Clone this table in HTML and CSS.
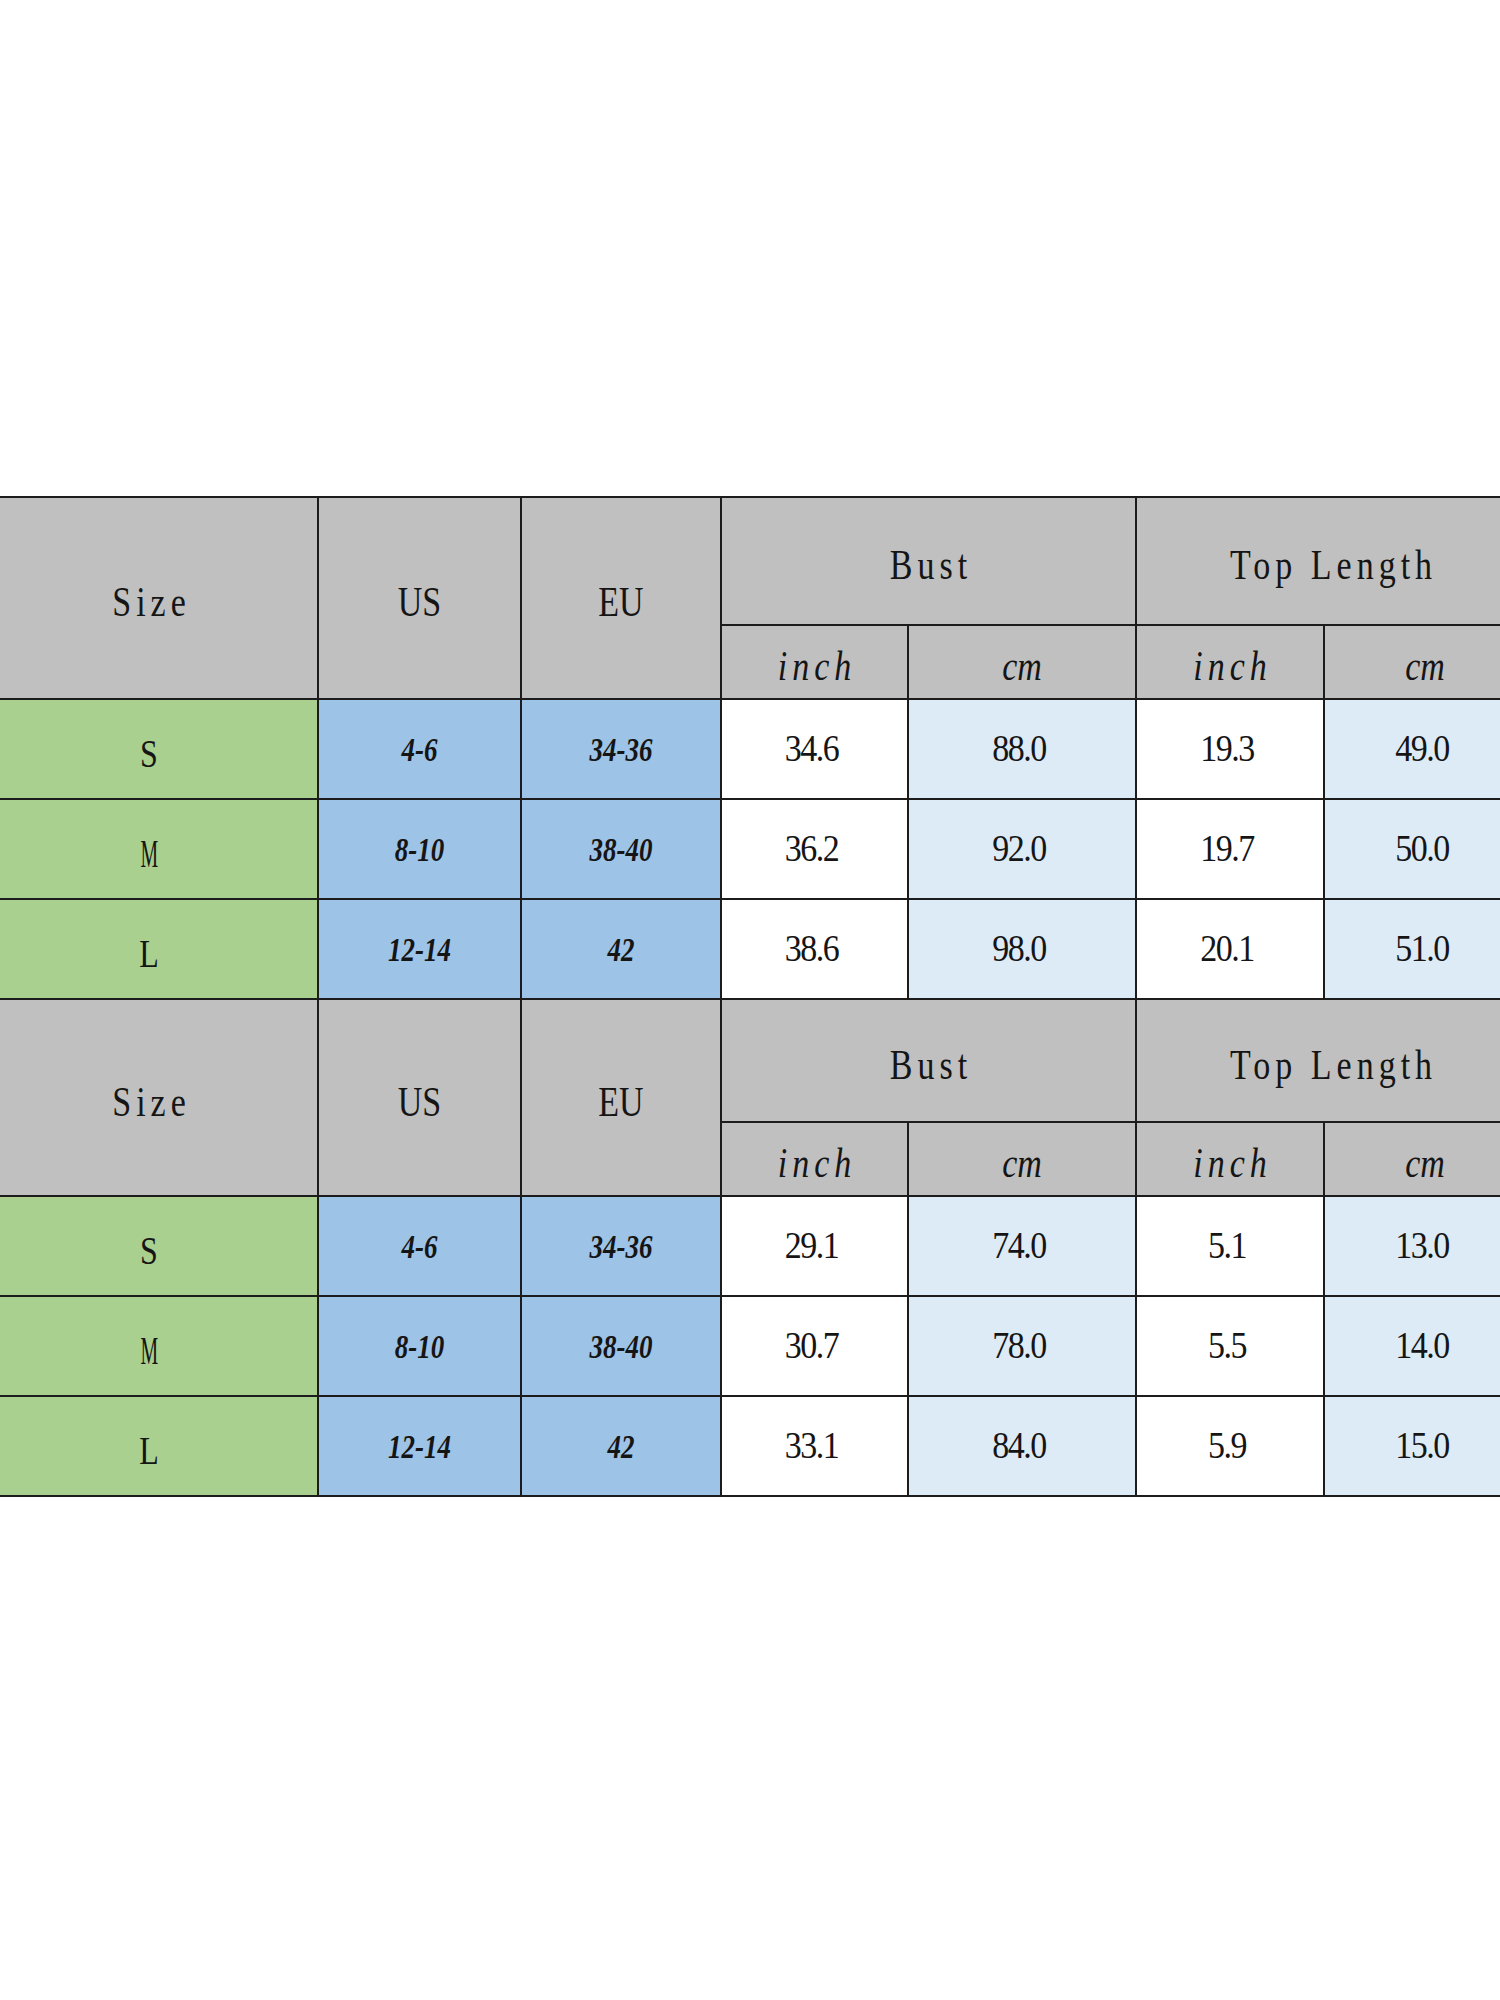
FILE: index.html
```html
<!DOCTYPE html>
<html lang="en">
<head>
<meta charset="utf-8">
<title>Size Chart</title>
<link rel="stylesheet" href="styles.css">
</head>
<body>
<div class="page">
  <table class="chart">
    <colgroup>
      <col class="w1"><col class="w2"><col class="w3"><col class="w4"><col class="w5"><col class="w6"><col class="w7">
    </colgroup>
    <tbody>
      <tr class="r-top1">
        <th rowspan="2" class="grey"><span class="lbl wide">Size</span></th>
        <th rowspan="2" class="grey"><span class="lbl">US</span></th>
        <th rowspan="2" class="grey"><span class="lbl">EU</span></th>
        <th colspan="2" class="grey"><span class="lbl wide">Bust</span></th>
        <th colspan="2" class="grey"><span class="lbl wide">Top Length</span></th>
      </tr>
      <tr class="r-sub">
        <th class="grey"><span class="lbl unit wide">inch</span></th>
        <th class="grey"><span class="lbl unit">cm</span></th>
        <th class="grey"><span class="lbl unit wide">inch</span></th>
        <th class="grey"><span class="lbl unit">cm</span></th>
      </tr>
      <tr class="r-data">
        <td class="green"><span class="lbl letter">S</span></td>
        <td class="blue"><span class="range">4-6</span></td>
        <td class="blue"><span class="range">34-36</span></td>
        <td class="white"><span class="num">34.6</span></td>
        <td class="light"><span class="num">88.0</span></td>
        <td class="white"><span class="num">19.3</span></td>
        <td class="light"><span class="num">49.0</span></td>
      </tr>
      <tr class="r-data">
        <td class="green"><span class="lbl letter narrow">M</span></td>
        <td class="blue"><span class="range">8-10</span></td>
        <td class="blue"><span class="range">38-40</span></td>
        <td class="white"><span class="num">36.2</span></td>
        <td class="light"><span class="num">92.0</span></td>
        <td class="white"><span class="num">19.7</span></td>
        <td class="light"><span class="num">50.0</span></td>
      </tr>
      <tr class="r-data">
        <td class="green"><span class="lbl letter">L</span></td>
        <td class="blue"><span class="range">12-14</span></td>
        <td class="blue"><span class="range">42</span></td>
        <td class="white"><span class="num">38.6</span></td>
        <td class="light"><span class="num">98.0</span></td>
        <td class="white"><span class="num">20.1</span></td>
        <td class="light"><span class="num">51.0</span></td>
      </tr>
      <tr class="r-top2">
        <th rowspan="2" class="grey"><span class="lbl wide">Size</span></th>
        <th rowspan="2" class="grey"><span class="lbl">US</span></th>
        <th rowspan="2" class="grey"><span class="lbl">EU</span></th>
        <th colspan="2" class="grey"><span class="lbl wide">Bust</span></th>
        <th colspan="2" class="grey"><span class="lbl wide">Top Length</span></th>
      </tr>
      <tr class="r-sub">
        <th class="grey"><span class="lbl unit wide">inch</span></th>
        <th class="grey"><span class="lbl unit">cm</span></th>
        <th class="grey"><span class="lbl unit wide">inch</span></th>
        <th class="grey"><span class="lbl unit">cm</span></th>
      </tr>
      <tr class="r-data">
        <td class="green"><span class="lbl letter">S</span></td>
        <td class="blue"><span class="range">4-6</span></td>
        <td class="blue"><span class="range">34-36</span></td>
        <td class="white"><span class="num">29.1</span></td>
        <td class="light"><span class="num">74.0</span></td>
        <td class="white"><span class="num">5.1</span></td>
        <td class="light"><span class="num">13.0</span></td>
      </tr>
      <tr class="r-data">
        <td class="green"><span class="lbl letter narrow">M</span></td>
        <td class="blue"><span class="range">8-10</span></td>
        <td class="blue"><span class="range">38-40</span></td>
        <td class="white"><span class="num">30.7</span></td>
        <td class="light"><span class="num">78.0</span></td>
        <td class="white"><span class="num">5.5</span></td>
        <td class="light"><span class="num">14.0</span></td>
      </tr>
      <tr class="r-data">
        <td class="green"><span class="lbl letter">L</span></td>
        <td class="blue"><span class="range">12-14</span></td>
        <td class="blue"><span class="range">42</span></td>
        <td class="white"><span class="num">33.1</span></td>
        <td class="light"><span class="num">84.0</span></td>
        <td class="white"><span class="num">5.9</span></td>
        <td class="light"><span class="num">15.0</span></td>
      </tr>
    </tbody>
  </table>
</div>
</body>
</html>
```

FILE: styles.css
```css
html, body {
  margin: 0;
  padding: 0;
  background: #ffffff;
}

body {
  overflow: hidden;
}

.page {
  width: 1500px;
  height: 2000px;
  padding-top: 496px;
  box-sizing: border-box;
  overflow: hidden;
}

.chart {
  border-collapse: collapse;
  table-layout: fixed;
  width: 1546px;
  margin-left: -21px;
}

.w1 { width: 338px; }
.w2 { width: 203px; }
.w3 { width: 200px; }
.w4 { width: 187px; }
.w5 { width: 228px; }
.w6 { width: 188px; }
.w7 { width: 202px; }

.chart th,
.chart td {
  border: 2px solid #1c1c1c;
  padding: 0;
  text-align: center;
  vertical-align: middle;
  font-weight: normal;
  color: #151515;
}

.r-top1 { height: 128px; }
.r-top2 { height: 123px; }
.r-sub { height: 74px; }
.r-data { height: 100px; }

.grey { background: #c0c0c0; }
.green { background: #a9d08e; }
.blue { background: #9dc3e6; }
.light { background: #ddebf7; }
.white { background: #ffffff; }

.lbl {
  display: inline-block;
  font-family: "Liberation Serif", "Times New Roman", serif;
  font-size: 34px;
  line-height: 1;
  transform: translateY(5px) scaleY(1.22);
  white-space: pre;
}

.wide {
  letter-spacing: 5px;
  padding-left: 5px;
}

.unit {
  font-style: italic;
}

.letter {
  font-size: 32px;
}

.narrow {
  transform: translateY(5px) scale(0.62, 1.22);
}

.range {
  display: inline-block;
  font-family: "Liberation Serif", "Times New Roman", serif;
  font-weight: bold;
  font-style: italic;
  font-size: 27px;
  line-height: 1;
  transform: translateY(1px) scaleY(1.22);
}

.num {
  display: inline-block;
  font-family: "Liberation Serif", "Times New Roman", serif;
  font-size: 34px;
  line-height: 1;
  letter-spacing: -1.5px;
  margin-left: -6px;
  transform: scaleY(1.1);
}
```
